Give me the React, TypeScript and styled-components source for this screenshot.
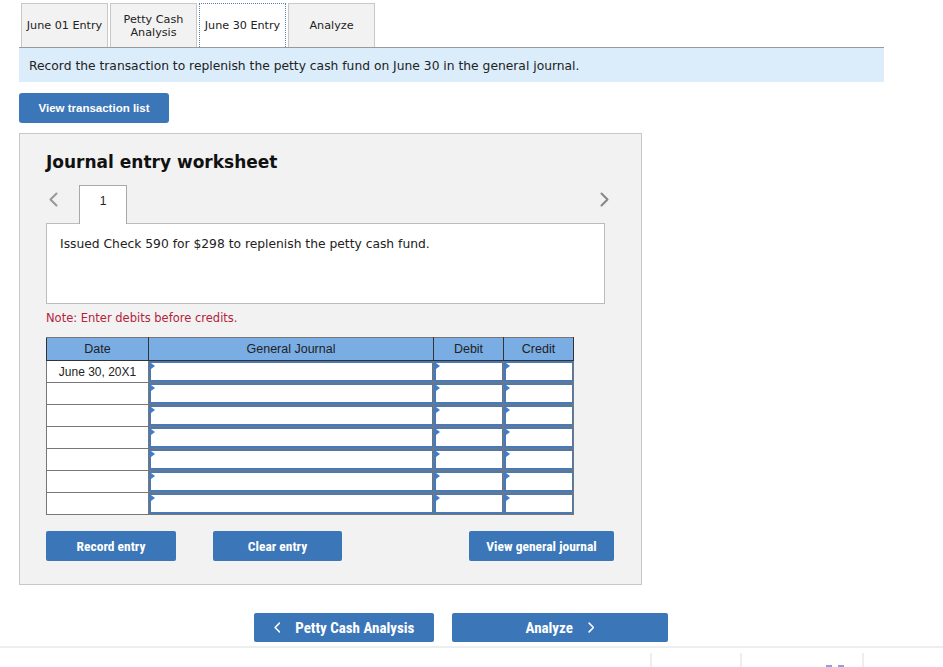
import styled, { createGlobalStyle } from 'styled-components';

const GlobalStyle = createGlobalStyle`
body {
  margin: 0;
  background: #fff;
  font-family: "DejaVu Sans", Verdana, sans-serif;
  color: #222;
}
`;

const Page = styled.div`
padding: 3px 0 0 19px;
width: 943px;
height: 667px;
box-sizing: border-box;
overflow: hidden;
`;

const TabsRow = styled.div`
display: flex;
gap: 2px;
margin-left: 2px;
`;

const Tab = styled.div<{ active?: boolean }>`
width: 87px;
height: 44px;
box-sizing: border-box;
display: flex;
align-items: center;
justify-content: center;
text-align: center;
font-size: 11.2px;
line-height: 13px;
color: #222;
background: ${p => (p.active ? '#fff' : '#f2f2f2')};
border: ${p => (p.active ? '1px dotted #5a7fb5' : '1px solid #c8c8c8')};
border-bottom: none;
`;

const Instruction = styled.div`
width: 865px;
height: 35px;
box-sizing: border-box;
border-top: 1px solid #9a9a9a;
background: #dbedfa;
padding: 2px 0 0 10px;
display: flex;
align-items: center;
font-size: 12.3px;
color: #222;
`;

const ListButton = styled.button`
margin-top: 11px;
width: 150px;
height: 30px;
border: none;
border-radius: 3px;
background: #3a76b8;
color: #fff;
font-family: "Liberation Sans", Arial, sans-serif;
font-weight: bold;
font-size: 11.5px;
`;

const Panel = styled.div`
margin-top: 10px;
width: 623px;
height: 452px;
box-sizing: border-box;
background: #f2f2f2;
border: 1px solid #c8c8c8;
padding: 17px 0 0 26px;
`;

const Title = styled.h2`
margin: 0;
font-size: 17px;
font-weight: bold;
color: #111;
line-height: 22px;
`;

const EntryNav = styled.div`
margin-top: 12px;
width: 559px;
display: flex;
align-items: flex-start;
`;

const Chevron = styled.span`
width: 33px;
padding: 7px 0 0 3px;
box-sizing: border-box;
display: flex;
`;

const NumberTab = styled.div`
width: 48px;
height: 39px;
box-sizing: border-box;
background: #fff;
border: 1px solid #a8a8a8;
border-bottom: none;
margin-bottom: -1px;
position: relative;
z-index: 1;
display: flex;
justify-content: center;
padding-top: 8px;
font-family: "Liberation Sans", Arial, sans-serif;
font-size: 12px;
`;

const NextChevron = styled.span`
margin-left: auto;
margin-right: -4px;
padding-top: 7px;
display: flex;
`;

const Description = styled.div`
width: 559px;
height: 81px;
box-sizing: border-box;
background: #fff;
border: 1px solid #bcbcbc;
padding: 13px 13px;
font-size: 12.3px;
color: #222;
`;

const Note = styled.div`
margin-top: 7px;
font-size: 11.5px;
color: #b4233c;
`;

const Journal = styled.table`
margin-top: 12px;
border-collapse: collapse;
font-family: "Liberation Sans", Arial, sans-serif;
font-size: 12px;
color: #222;
`;

const HeadCell = styled.th<{ w: number }>`
width: ${p => p.w}px;
height: 23px;
box-sizing: border-box;
padding: 0;
background: #79ade4;
border: 1px solid #333;
border-top-color: #777;
font-weight: normal;
font-size: 12.5px;
`;

const DateCell = styled.td`
height: 22px;
box-sizing: border-box;
padding: 0;
background: #fff;
border: 1px solid #777;
text-align: center;
`;

const InputCell = styled.td`
height: 22px;
box-sizing: border-box;
padding: 0;
border: 1px solid #777;
`;

const InputBox = styled.div`
position: relative;
height: 21px;
box-sizing: border-box;
background: #fff;
border: 2px solid #4a7ab6;
border-right-width: 1px;
&::before {
  content: '';
  position: absolute;
  top: 0;
  left: 0;
  border-top: 3px solid transparent;
  border-bottom: 3px solid transparent;
  border-left: 4px solid #3d7ed0;
}
`;

const ActionRow = styled.div`
margin-top: 16px;
display: flex;
`;

const ActionButton = styled.button<{ w: number; gap: number }>`
width: ${p => p.w}px;
margin-left: ${p => p.gap}px;
height: 30px;
border: none;
border-radius: 2px;
background: #3a76b8;
color: #fff;
font-family: "Roboto Condensed", "Liberation Sans Narrow", Roboto, sans-serif;
font-stretch: condensed;
font-weight: bold;
font-size: 13.5px;
`;

const NavRow = styled.div`
margin-top: 28px;
padding-left: 235px;
display: flex;
gap: 18px;
`;

const NavButton = styled.button<{ w: number }>`
width: ${p => p.w}px;
height: 29px;
border: none;
border-radius: 2px;
background: #3a76b8;
color: #fff;
display: flex;
align-items: center;
justify-content: center;
gap: 15px;
font-family: "Roboto Condensed", "Liberation Sans Narrow", Roboto, sans-serif;
font-stretch: condensed;
font-weight: bold;
font-size: 15px;
`;

const Footer = styled.div`
margin: 4px 0 0 -19px;
border-top: 2px solid #eeeeee;
height: 30px;
display: flex;
padding-left: 650px;
`;

const FooterCell = styled.div<{ w: number }>`
width: ${p => p.w}px;
margin-top: 5px;
border-left: 2px solid #eeeeee;
`;

const Dashes = styled.div`
margin: 12px 0 0 84px;
width: 18px;
border-top: 3px dashed #8f9fe0;
`;

const ChevronIcon = ({ dir, color, size }: { dir: 'left' | 'right'; color: string; size: number }) => (
    <svg width={size * 0.6} height={size} viewBox="0 0 6 10">
        <path
            d={dir === 'left' ? 'M5 1 L1 5 L5 9' : 'M1 1 L5 5 L1 9'}
            fill="none"
            stroke={color}
            strokeWidth="1.4"
            strokeLinecap="round"
            strokeLinejoin="round"
        />
    </svg>
);

const COLUMNS = [
    { name: 'Date', w: 102 },
    { name: 'General Journal', w: 285 },
    { name: 'Debit', w: 70 },
    { name: 'Credit', w: 70 },
];

const ROWS = ['June 30, 20X1', '', '', '', '', '', ''];

function App() {
    return (
        <>
            <GlobalStyle />
            <Page>
                <TabsRow>
                    <Tab>June 01 Entry</Tab>
                    <Tab>Petty Cash<br />Analysis</Tab>
                    <Tab active>June 30 Entry</Tab>
                    <Tab>Analyze</Tab>
                </TabsRow>
                <Instruction>
                    Record the transaction to replenish the petty cash fund on June 30 in the general journal.
                </Instruction>
                <ListButton>View transaction list</ListButton>
                <Panel>
                    <Title>Journal entry worksheet</Title>
                    <EntryNav>
                        <Chevron><ChevronIcon dir="left" color="#999" size={15} /></Chevron>
                        <NumberTab>1</NumberTab>
                        <NextChevron><ChevronIcon dir="right" color="#888" size={15} /></NextChevron>
                    </EntryNav>
                    <Description>Issued Check 590 for $298 to replenish the petty cash fund.</Description>
                    <Note>Note: Enter debits before credits.</Note>
                    <Journal>
                        <thead>
                            <tr>
                                {COLUMNS.map(c => (
                                    <HeadCell key={c.name} w={c.w}>{c.name}</HeadCell>
                                ))}
                            </tr>
                        </thead>
                        <tbody>
                            {ROWS.map((date, i) => (
                                <tr key={i}>
                                    <DateCell>{date}</DateCell>
                                    <InputCell><InputBox /></InputCell>
                                    <InputCell><InputBox /></InputCell>
                                    <InputCell><InputBox /></InputCell>
                                </tr>
                            ))}
                        </tbody>
                    </Journal>
                    <ActionRow>
                        <ActionButton w={130} gap={0}>Record entry</ActionButton>
                        <ActionButton w={129} gap={37}>Clear entry</ActionButton>
                        <ActionButton w={145} gap={127}>View general journal</ActionButton>
                    </ActionRow>
                </Panel>
                <NavRow>
                    <NavButton w={180}>
                        <ChevronIcon dir="left" color="#fff" size={11} />
                        Petty Cash Analysis
                    </NavButton>
                    <NavButton w={216}>
                        Analyze
                        <ChevronIcon dir="right" color="#fff" size={11} />
                    </NavButton>
                </NavRow>
                <Footer>
                    <FooterCell w={90} />
                    <FooterCell w={122}><Dashes /></FooterCell>
                    <FooterCell w={80} />
                </Footer>
            </Page>
        </>
    );
}

export default App;
